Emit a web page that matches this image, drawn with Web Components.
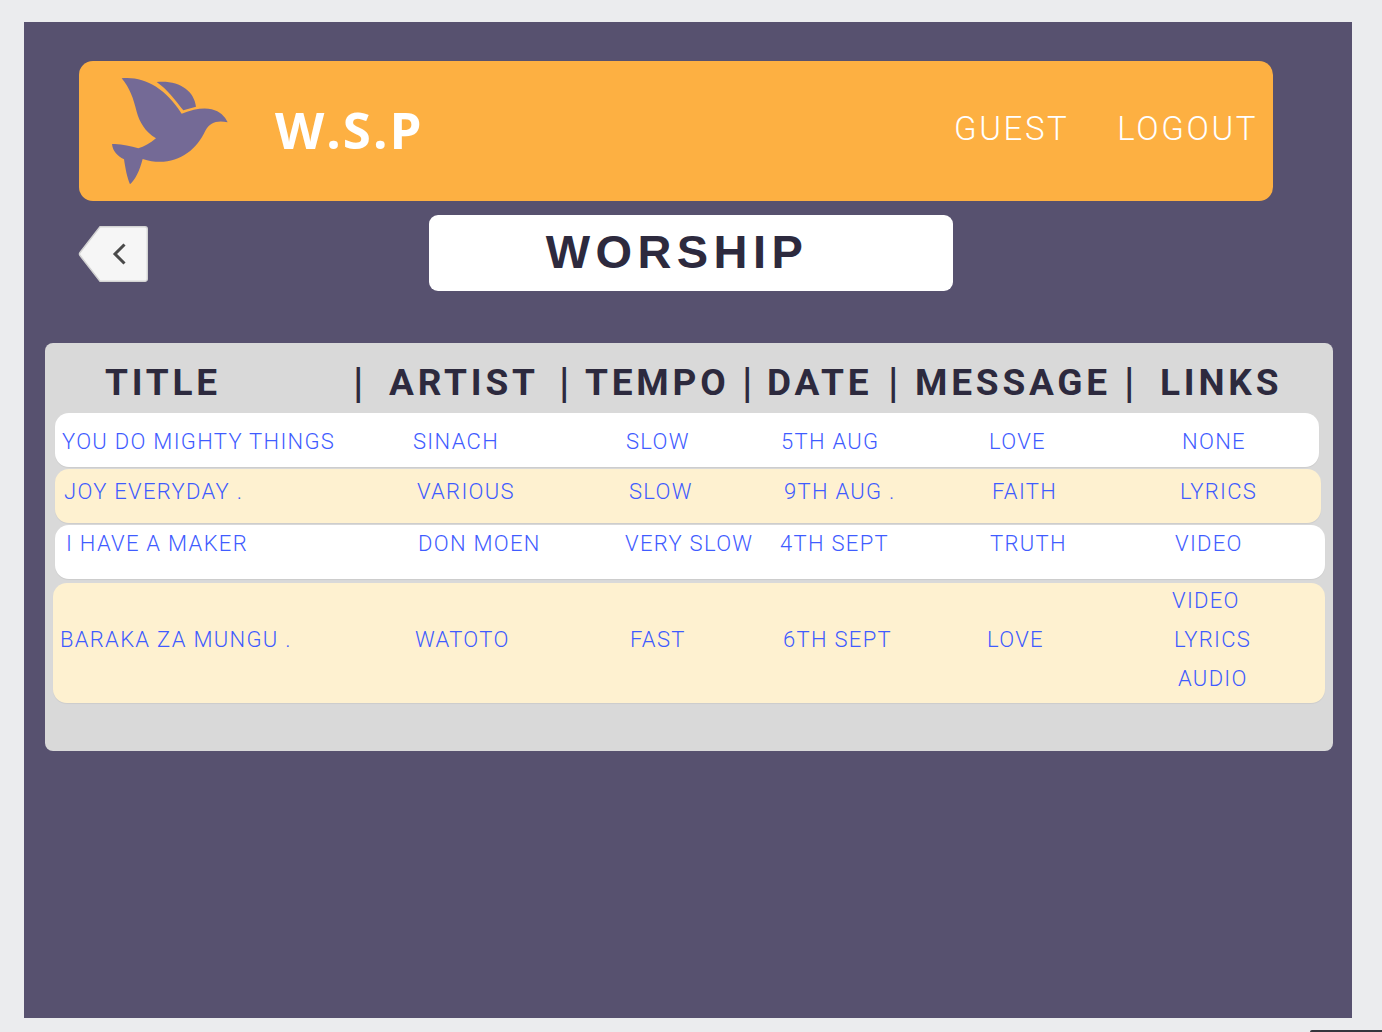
<!DOCTYPE html>
<html>
<head>
<meta charset="utf-8">
<title>W.S.P</title>
<style>
    html, body { margin: 0; height: 100%; overflow: hidden; background: #ebecee; }
    body { font-family: "Liberation Sans", Arial, sans-serif; position: relative; }
    .corner { position: absolute; left: 1310px; top: 1030px; width: 72px; height: 2px; border-radius: 20px 0 0 0; background: #35353d; }
</style>
</head>
<body>
<wsp-page>
    <wsp-header slot="header"></wsp-header>
    <wsp-toolbar slot="toolbar" heading="WORSHIP"></wsp-toolbar>
    <wsp-card slot="card">
        <wsp-heads></wsp-heads>
        <wsp-row style="--cols:351px 213px 155px 208px 193px 1fr; --pl:7px; --pt:16px; --h:54px; --mx:0 14px 0 10px; --bg:#fff">
            <span>YOU DO MIGHTY THINGS</span><span>SINACH</span><span>SLOW</span><span>5TH AUG</span><span>LOVE</span><span>NONE</span>
        </wsp-row>
        <wsp-row style="--cols:353px 212px 155px 208px 188px 1fr; --pl:9px; --pt:10px; --h:54px; --mx:2px 12px 0 10px; --bg:#fef1d0">
            <span>JOY EVERYDAY .</span><span>VARIOUS</span><span>SLOW</span><span>9TH AUG .</span><span>FAITH</span><span>LYRICS</span>
        </wsp-row>
        <wsp-row style="--cols:352px 207px 155px 210px 185px 1fr; --pl:11px; --pt:6px; --h:54px; --mx:2px 8px 0 10px; --bg:#fff">
            <span>I HAVE A MAKER</span><span>DON MOEN</span><span>VERY SLOW</span><span>4TH SEPT</span><span>TRUTH</span><span>VIDEO</span>
        </wsp-row>
        <wsp-row style="--cols:355px 215px 153px 204px 185px 1fr; --pl:7px; --pt:0px; --pb:6px; --h:120px; --mx:4px 8px 0 8px; --bg:#fef1d0; --align:center">
            <span>BARAKA ZA MUNGU .</span><span>WATOTO</span><span>FAST</span><span>6TH SEPT</span><span>LOVE</span>
            <wsp-links><span>VIDEO</span><span class="l2">LYRICS</span><span class="l3">AUDIO</span></wsp-links>
        </wsp-row>
    </wsp-card>
</wsp-page>
<div class="corner"></div>

<script>
    function define(name, html, extra) {
        var tpl = document.createElement('template');
        tpl.innerHTML = html;
        customElements.define(name, class extends HTMLElement {
            constructor() {
                super();
                var shadowRoot = this.attachShadow({mode: 'open'});
                shadowRoot.appendChild(tpl.content.cloneNode(true));
            }
            connectedCallback() {
                if (extra) extra(this);
            }
        });
    }

    define('wsp-page', `
        <style>
            :host { display: block; box-sizing: border-box; width: 1328px; height: 996px; margin: 22px 0 0 24px; padding: 39px 19px 0 21px; background: #57516f; }
        </style>
        <slot name="header"></slot>
        <slot name="toolbar"></slot>
        <slot name="card"></slot>
    `);

    define('wsp-header', `
        <style>
            :host { display: flex; align-items: center; box-sizing: border-box; height: 140px; margin: 0 60px 0 34px; padding: 0 15px 0 21px; background: #fdb042; border-radius: 14px; }
            svg { display: block; flex: none; margin-top: -2px; }
            .brand { margin: -4px 0 0 35px; font: 700 51px/1 "Open Sans", sans-serif; letter-spacing: 2px; color: #fff; }
            nav { margin: -6px 0 0 auto; display: flex; gap: 48px; font: 300 33px/1 Roboto, sans-serif; letter-spacing: 2.6px; color: #fff; }
        </style>
        <svg width="140" height="120" viewBox="0 0 420 360">
            <path fill="#746a96" d="M65 25C130 18 195 52 245 131C280 118 310 112 335 118C360 124 375 140 383 157C350 150 330 158 316 182C285 250 215 295 128 267C118 305 105 330 90 343C82 325 76 295 72 268C52 258 38 243 36 222C62 220 90 228 115 235C132 230 150 220 168 205C135 185 118 155 110 125C100 85 90 55 65 25Z"/>
            <path fill="#746a96" d="M170 36C238 30 282 62 288 110L250 121C225 90 202 58 170 36Z"/>
        </svg>
        <div class="brand">W.S.P</div>
        <nav><span>GUEST</span><span>LOGOUT</span></nav>
    `);

    define('wsp-toolbar', `
        <style>
            :host { display: flex; align-items: center; height: 76px; margin: 14px 0 0 34px; }
            svg { display: block; flex: none; margin: 2px 0 0 -1px; }
            h1 { box-sizing: border-box; width: 524px; height: 76px; margin: 0 0 0 281px; padding-right: 28px; background: #fff; border-radius: 9px; color: #2d2a3e; font: 700 47px/74px "Liberation Sans", sans-serif; letter-spacing: 5.4px; text-align: center; }
        </style>
        <svg width="70" height="56" viewBox="0 0 70 56">
            <path d="M22 .7H67a2.300 2.300 0 0 1 2.300 2.300V53a2.300 2.300 0 0 1-2.300 2.300H22L2 29.500a2.500 2.500 0 0 1 0-3Z" fill="#f6f6f6" stroke="#d3d3d3" stroke-width="1.400"/>
            <path d="M46.500 18.500L37 28l9.500 9.500" fill="none" stroke="#4a4a4a" stroke-width="3"/>
        </svg>
        <h1></h1>
    `, function (el) {
        el.shadowRoot.querySelector('h1').textContent = el.getAttribute('heading');
    });

    define('wsp-card', `
        <style>
            :host { display: block; box-sizing: border-box; height: 408px; margin-top: 52px; background: #d9d9d9; border-radius: 8px; }
        </style>
        <slot></slot>
    `);

    define('wsp-heads', `
        <style>
            :host { display: grid; grid-template-columns: 253px 31px 175px 21px 162px 20px 126px 22px 214px 31px 1fr; box-sizing: border-box; height: 70px; padding: 18px 0 0 60px; color: #2d2a3e; font: 700 37px/44px Roboto, sans-serif; letter-spacing: 3.8px; white-space: nowrap; }
            i { font: normal 500 42px/44px Roboto, sans-serif; letter-spacing: 0; margin-left: -5px; }
        </style>
        <span>TITLE</span><i>|</i><span>ARTIST</span><i>|</i><span>TEMPO</span><i>|</i><span>DATE</span><i>|</i><span>MESSAGE</span><i>|</i><span>LINKS</span>
    `);

    define('wsp-row', `
        <style>
            :host { display: grid; grid-template-columns: var(--cols); align-items: var(--align, start); box-sizing: border-box; height: var(--h); margin: var(--mx); padding: var(--pt) 0 var(--pb, 0) var(--pl); background: var(--bg); border-radius: 14px; box-shadow: 0 1px 1px rgba(0, 0, 0, .06); color: #3f5cff; font: 300 22px/26px Roboto, sans-serif; letter-spacing: 1.3px; white-space: nowrap; }
        </style>
        <slot></slot>
    `);

    define('wsp-links', `
        <style>
            :host { display: flex; flex-direction: column; gap: 13px; align-items: flex-start; }
            ::slotted(.l2) { margin-left: 2px; }
            ::slotted(.l3) { margin-left: 6px; }
        </style>
        <slot></slot>
    `);
</script>
</body>
</html>
